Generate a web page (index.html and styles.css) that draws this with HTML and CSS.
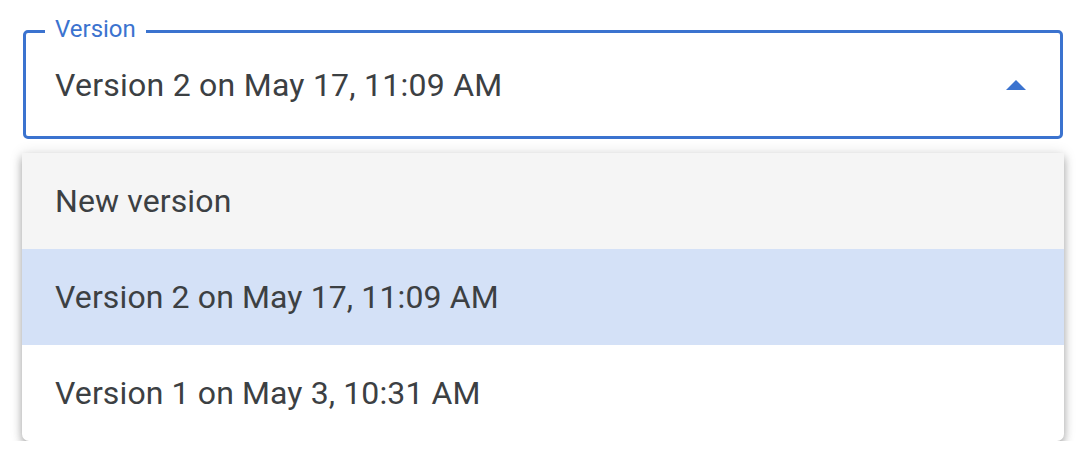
FILE: index.html
```html
<!DOCTYPE html>
<html>
<head>
<meta charset="utf-8">
<link rel="stylesheet" href="styles.css">
</head>
<body>
<div class="wrap">
  <div class="field">
    <span class="label">Version</span>
    <span class="value">Version 2 on May 17, 11:09 AM</span>
    <svg class="arrow" width="20" height="10" viewBox="0 0 20 10"><path d="M0 10 L10 0 L20 10 Z" fill="#3b73cf"/></svg>
  </div>
  <ul class="menu">
    <li class="item hover">New version</li>
    <li class="item selected">Version 2 on May 17, 11:09 AM</li>
    <li class="item">Version 1 on May 3, 10:31 AM</li>
  </ul>
</div>
</body>
</html>
```
FILE: styles.css
```css
html, body {
  margin: 0;
  padding: 0;
  background: #ffffff;
  font-family: Roboto, "Liberation Sans", Arial, sans-serif;
  color: #3c4043;
}
.wrap {
  padding: 30px 16px 0 22px;
}
.field {
  position: relative;
  margin: 0 1px;
  height: 103px;
  border: 3px solid #3b73cf;
  border-radius: 5px;
  display: flex;
  align-items: center;
  padding: 0 34px 0 29px;
}
.label {
  position: absolute;
  left: 19px;
  top: -16px;
  padding: 0 10px;
  background: #ffffff;
  font-size: 24px;
  line-height: 24px;
  color: #3b73cf;
}
.value {
  flex: 1;
  font-size: 32px;
  line-height: 32px;
  letter-spacing: 0.25px;
}
.arrow {
  display: block;
  margin-top: 1px;
}
.menu {
  list-style: none;
  margin: 14px 0 0 0;
  padding: 0;
  background: #ffffff;
  border-radius: 0 0 7px 7px;
  box-shadow: 0 5px 9px rgba(0, 0, 0, 0.3), 0 0 14px rgba(0, 0, 0, 0.12);
  overflow: hidden;
}
.item {
  height: 96px;
  display: flex;
  align-items: center;
  padding-left: 33px;
  font-size: 32px;
  line-height: 32px;
  letter-spacing: 0.12px;
}
.item.hover {
  background: #f5f5f5;
}
.item.selected {
  background: #d4e1f7;
}
```
